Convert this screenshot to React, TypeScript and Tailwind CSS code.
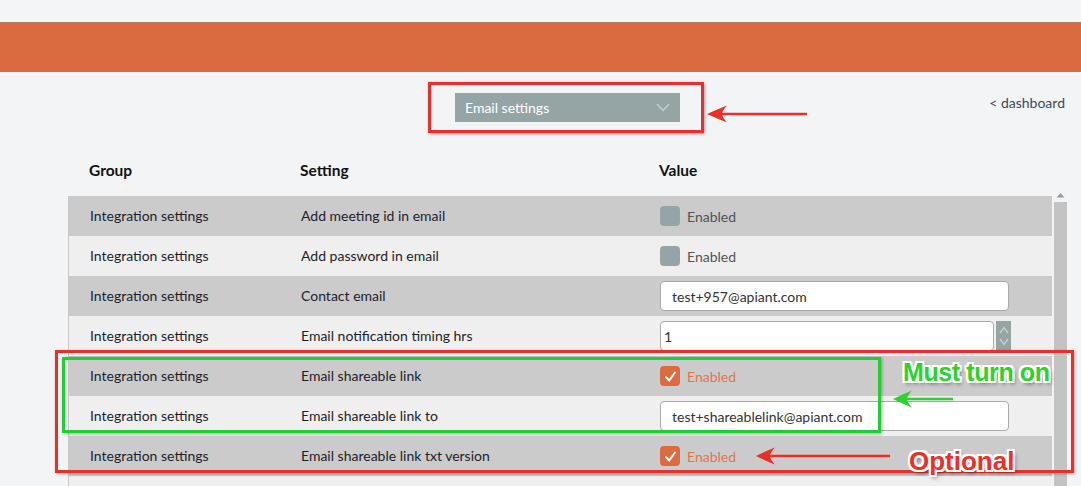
import React from "react";

type Row =
  | { setting: string; kind: "check"; checked: boolean }
  | { setting: string; kind: "text"; value: string }
  | { setting: string; kind: "number"; value: string }
  | { setting: string; kind: "empty" };

const rows: Row[] = [
  { setting: "Add meeting id in email", kind: "check", checked: false },
  { setting: "Add password in email", kind: "check", checked: false },
  { setting: "Contact email", kind: "text", value: "test+957@apiant.com" },
  { setting: "Email notification timing hrs", kind: "number", value: "1" },
  { setting: "Email shareable link", kind: "check", checked: true },
  { setting: "Email shareable link to", kind: "text", value: "test+shareablelink@apiant.com" },
  { setting: "Email shareable link txt version", kind: "check", checked: true },
  { setting: "", kind: "empty" },
];

function Check({ checked }: { checked: boolean }) {
  return (
    <div className="flex items-center gap-[7px]">
      <div
        className={
          checked
            ? "w-[20px] h-[20px] rounded-[4px] bg-[#dd6b3f] flex items-center justify-center"
            : "w-[20px] h-[20px] rounded-[4px] bg-[#95a5a6]"
        }
      >
        {checked && (
          <svg width="13" height="13" viewBox="0 0 13 13">
            <path d="M2 7 L5.2 10.5 L11 2.5" fill="none" stroke="#fff" strokeWidth="2" strokeLinecap="round" strokeLinejoin="round" />
          </svg>
        )}
      </div>
      <span className={checked ? "text-[#e07550]" : "text-[#4f5555]"}>Enabled</span>
    </div>
  );
}

const outline =
  "[text-shadow:-2px_-2px_0_#fff,2px_-2px_0_#fff,-2px_2px_0_#fff,2px_2px_0_#fff,0_2px_0_#fff,0_-2px_0_#fff,2px_0_0_#fff,-2px_0_0_#fff,2px_3px_4px_rgba(0,0,0,0.55)]";

export default function App() {
  return (
    <div className="relative w-[1081px] h-[486px] overflow-hidden bg-[#f3f4f5] font-['Lato','Liberation_Sans',sans-serif] text-[14px] text-[#1e1e2a]">
      <div className="h-[22px] bg-[#f4f5f6]" />
      <div className="h-[50px] bg-[#da6b41] border-t border-[#b57a63]" />

      {/* toolbar */}
      <div className="flex pt-[21px]">
        <div className="ml-[455px] w-[225px] h-[29px] bg-[#95a5a6] flex items-center justify-between pl-[10px] pr-[10px] text-white text-[14px]">
          <span>Email settings</span>
          <svg width="14" height="9" viewBox="0 0 14 9">
            <path d="M1 1 L7 7.5 L13 1" fill="none" stroke="#c3cdce" strokeWidth="1.5" />
          </svg>
        </div>
        <a className="ml-auto mr-[16px] text-[#3b4a55] text-[14px] leading-[20px]">&lt; dashboard</a>
      </div>

      {/* header */}
      <div className="ml-[68px] mt-[34px] h-[30px] w-[983px] grid grid-cols-[211px_358px_1fr] items-center font-bold text-[15.5px] text-[#111]">
        <div className="pl-[21px]">Group</div>
        <div className="pl-[21px]">Setting</div>
        <div className="pl-[22px]">Value</div>
      </div>

      {/* table */}
      <div className="ml-[68px] mt-[10px] flex border-l border-[#c9c9c9]">
        <div className="w-[983px]">
          {rows.map((r, i) => (
            <div
              key={i}
              className={
                "h-[40px] grid grid-cols-[211px_358px_1fr] items-center " +
                (i % 2 === 0 ? "bg-[#cbcbcb]" : "bg-[#efefef]")
              }
            >
              <div className="pl-[21px] -mt-[2px]">{r.kind === "empty" ? "" : "Integration settings"}</div>
              <div className="pl-[21px] -mt-[2px]">{r.setting}</div>
              <div className="pl-[22px]">
                {r.kind === "check" && <Check checked={r.checked} />}
                {r.kind === "text" && (
                  <div className="w-[349px] h-[30px] bg-white border border-[#a9a9a9] rounded-[4px] flex items-center pl-[11px] text-[#333]">
                    {r.value}
                  </div>
                )}
                {r.kind === "number" && (
                  <div className="flex items-center gap-[2px]">
                    <div className="w-[334px] h-[30px] bg-white border border-[#a9a9a9] rounded-[4px] flex items-center pl-[3px] text-[#333]">
                      {r.value}
                    </div>
                    <div className="w-[15px] h-[30px] bg-[#95a5a6] flex flex-col items-center justify-center gap-[4px]">
                      <svg width="10" height="8" viewBox="0 0 10 8">
                        <path d="M1 7 L5 1.5 L9 7" fill="none" stroke="#c8d1d2" strokeWidth="1.3" />
                      </svg>
                      <svg width="10" height="8" viewBox="0 0 10 8">
                        <path d="M1 1 L5 6.5 L9 1" fill="none" stroke="#c8d1d2" strokeWidth="1.3" />
                      </svg>
                    </div>
                  </div>
                )}
              </div>
            </div>
          ))}
        </div>
        <div className="ml-[2px] w-[13px] flex flex-col items-center -mt-[4px]">
          <svg width="9" height="6" viewBox="0 0 9 6" className="mb-[4px]">
            <path d="M0.5 5.5 L4.5 1 L8.5 5.5 Z" fill="#9a9a9a" />
          </svg>
          <div className="w-[13px] h-[300px] bg-[#c3c3c3]" />
        </div>
      </div>

      {/* annotations */}
      <div className="absolute left-[428px] top-[82px] w-[276px] h-[51px] border-[3px] border-[#e8302a] shadow-[1px_1px_3px_rgba(0,0,0,0.35)]" />
      <svg className="absolute left-[706px] top-[104px]" width="104" height="20" viewBox="0 0 104 20">
        <line x1="16" y1="10" x2="101" y2="10" stroke="#e8302a" strokeWidth="2.5" />
        <path d="M1 10 Q12 5 21 1.5 Q16 7 16 10 Q16 13 21 18.5 Q12 15 1 10 Z" fill="#e8302a" />
      </svg>

      <div className="absolute left-[55px] top-[350px] w-[1019px] h-[123px] border-[3px] border-[#e8302a] shadow-[1px_1px_3px_rgba(0,0,0,0.3)]" />
      <div className="absolute left-[62px] top-[357px] w-[819px] h-[76px] border-[3px] border-[#22cc33] shadow-[1px_1px_3px_rgba(0,0,0,0.3)]" />

      <div className={"absolute left-[903px] top-[357px] font-['Liberation_Sans',sans-serif] font-bold text-[25px] tracking-[-0.4px] leading-[30px] text-[#2bd32b] " + outline}>
        Must turn on
      </div>
      <svg className="absolute left-[891px] top-[389px]" width="64" height="20" viewBox="0 0 64 20">
        <line x1="16" y1="10" x2="62" y2="10" stroke="#2bd32b" strokeWidth="2.5" />
        <path d="M2 10 Q12 5 21 1.5 Q16 7 16 10 Q16 13 21 18.5 Q12 15 2 10 Z" fill="#2bd32b" />
      </svg>

      <div className={"absolute left-[909px] top-[446px] font-['Liberation_Sans',sans-serif] font-bold text-[26px] leading-[30px] text-[#ec2f2a] " + outline}>
        Optional
      </div>
      <svg className="absolute left-[754px] top-[446px]" width="138" height="20" viewBox="0 0 138 20">
        <line x1="16" y1="10" x2="136" y2="10" stroke="#e8302a" strokeWidth="2.5" />
        <path d="M2 10 Q12 5 21 1.5 Q16 7 16 10 Q16 13 21 18.5 Q12 15 2 10 Z" fill="#e8302a" />
      </svg>
    </div>
  );
}
